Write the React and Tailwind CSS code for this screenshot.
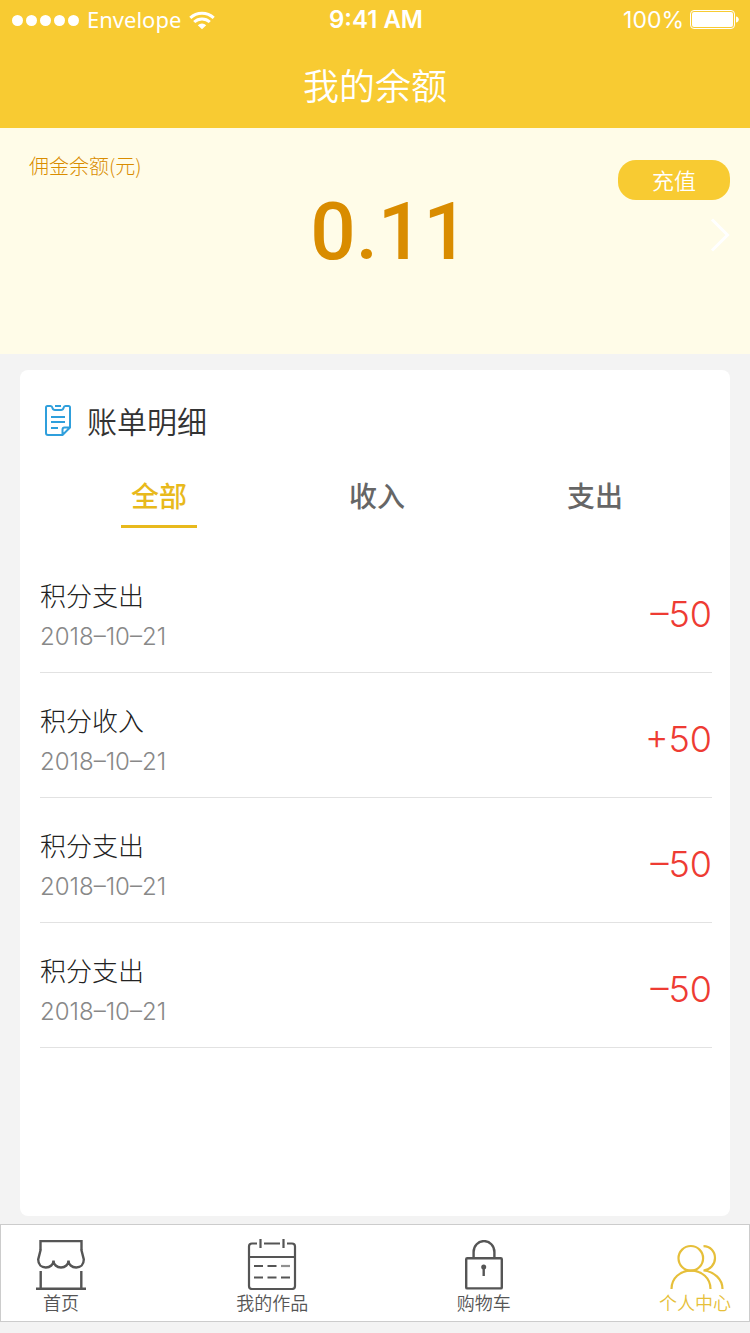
import React, { useState } from "react";

const tabs = ["全部", "收入", "支出"];

const records = [
    { id: 1, title: "积分支出", date: "2018–10–21", amount: "–50" },
    { id: 2, title: "积分收入", date: "2018–10–21", amount: "+50" },
    { id: 3, title: "积分支出", date: "2018–10–21", amount: "–50" },
    { id: 4, title: "积分支出", date: "2018–10–21", amount: "–50" },
];

function WifiIcon() {
    return (
        <svg width="26" height="19" viewBox="0 0 26 19" fill="none" stroke="currentColor" strokeWidth="3">
            <path d="M1.3 6.8a17 17 0 0 1 23.4 0" />
            <path d="M5.2 11a11.4 11.4 0 0 1 15.6 0" />
            <path d="M13 18.2 8.8 14.2a6 6 0 0 1 8.4 0Z" fill="currentColor" stroke="none" />
        </svg>
    );
}

function BatteryIcon() {
    return (
        <svg width="50" height="20" viewBox="0 0 50 20" fill="none">
            <rect x="0.5" y="0.5" width="44" height="18" rx="3.5" stroke="currentColor" />
            <rect x="2" y="2" width="41" height="15" rx="2" fill="currentColor" />
            <path d="M46 6.5c1.6.3 2.8 1.4 2.8 3s-1.2 2.7-2.8 3Z" fill="currentColor" />
        </svg>
    );
}

function BillIcon() {
    return (
        <svg width="26" height="31" viewBox="0 0 26 31" fill="none" stroke="#2f9fdc" strokeWidth="2" strokeLinejoin="round">
            <path d="M17 30H3a2 2 0 0 1-2-2V2.5Q1 1 2.5 1H5.5Q7 1 7.5 3Q8 5 10 5H16Q18 5 18.5 3Q19 1 20.5 1H23.5Q25 1 25 2.5V22.5L17.5 30V24.5a2 2 0 0 1 2-2H25" />
            <path d="M10 1H16M6 12H20M6 17H20M6 23H13" />
        </svg>
    );
}

function ShopIcon() {
    return (
        <svg width="50" height="50" viewBox="0 0 50 50" fill="none" stroke="currentColor" strokeWidth="2.4">
            <path d="M4.5 10V1.1H45.5V10" />
            <path d="M4.7 9.5 2.2 19.5C2.2 24.5 5.5 27.5 9.8 27.5C14.2 27.5 17.5 24.5 17.5 20.5C17.5 24.5 20.8 27.5 25 27.5C29.2 27.5 32.5 24.5 32.5 20.5C32.5 24.5 35.8 27.5 40.2 27.5C44.5 27.5 47.8 24.5 47.8 19.5L45.3 9.5" />
            <path d="M4.7 31V49M45.3 31V49M0 48.8H50" />
        </svg>
    );
}

function CalendarIcon() {
    return (
        <svg width="50" height="51" viewBox="0 0 50 51" fill="none" stroke="currentColor" strokeWidth="2.2">
            <path d="M10 4.5H5Q2 4.5 2 7.5V47Q2 50 5 50H45Q48 50 48 47V7.5Q48 4.5 45 4.5H40M17 4.5H33M13.5 0V9M36.5 0V9M2 18H48" />
            <path d="M7 27H16M20.5 27H29.5M7 38.5H16M20.5 38.5H29.5M34 38.5H43" />
            <path d="M34 27H43" opacity="0.65" />
        </svg>
    );
}

function LockIcon() {
    return (
        <svg width="38" height="50" viewBox="0 0 38 50" fill="none" stroke="currentColor" strokeWidth="2.4">
            <rect x="1.2" y="18.2" width="35.6" height="30.2" rx="1" />
            <path d="M8.6 19V12a10.4 10.9 0 0 1 20.8 0V19" />
            <circle cx="18.7" cy="27" r="2.5" fill="currentColor" stroke="none" />
            <path d="M18.7 27V36" />
        </svg>
    );
}

function UsersIcon() {
    return (
        <svg width="58" height="50" viewBox="-4 0 58 50" fill="none" stroke="currentColor" strokeWidth="2.2">
            <circle cx="20.8" cy="18.3" r="12.3" />
            <path d="M1.5 49C1.5 38 10 30.7 21 30.7S40.5 38 40.5 49" />
            <path d="M33.5 6.1C40 6.1 45 11 45 18C45 24.5 40 30 33.5 30.5C44 31.5 52.5 39 52.5 49" />
        </svg>
    );
}

const navItems = [
    { label: "首页", icon: ShopIcon },
    { label: "我的作品", icon: CalendarIcon },
    { label: "购物车", icon: LockIcon },
    { label: "个人中心", icon: UsersIcon, active: true },
];

function StatusBar() {
    return (
        <div className="grid grid-cols-3 items-center h-10 pl-3 pr-2.5 leading-6">
            <div className="flex items-center gap-2">
                <div className="flex gap-[3px]">
                    {[1, 2, 3, 4, 5].map((dot) => (
                        <span key={dot} className="w-[11px] h-[11px] rounded-full bg-white" />
                    ))}
                </div>
                <span className="pb-0.5 font-['Noto_Sans'] font-normal text-[22px]">Envelope</span>
                <WifiIcon />
            </div>
            <div className="text-center font-[Inter] font-semibold text-2xl">9:41 AM</div>
            <div className="flex items-center justify-end gap-1.5">
                <span className="font-[Inter] font-normal text-[23px]">100%</span>
                <BatteryIcon />
            </div>
        </div>
    );
}

function RecordRow({ record }) {
    return (
        <li className="flex items-center justify-between h-[125px] pt-3 border-b border-[#e2e2e2]">
            <div className="flex flex-col gap-0.5">
                <div className="text-[26px] leading-10 font-light text-[#222]">{record.title}</div>
                <div className="font-[Inter] font-light text-2xl leading-10 text-[#888]">{record.date}</div>
            </div>
            <div className="pb-1 font-[Inter] font-light text-4xl leading-10 text-[#ee3b33]">{record.amount}</div>
        </li>
    );
}

function App() {
    const [activeTab, setActiveTab] = useState(tabs[0]);

    return (
        <div className="flex flex-col min-h-screen bg-[#f3f3f3] font-['Noto_Sans_CJK_SC',sans-serif] font-[350]">
            <header className="bg-[#f8cb32] text-white">
                <StatusBar />
                <h1 className="h-[88px] text-4xl leading-[88px] text-center">我的余额</h1>
            </header>

            <section className="grid grid-cols-[1fr_auto_1fr] h-[226px] pl-[29px] pr-5 bg-[#fffce8]">
                <div className="pt-6 text-xl leading-7 font-light text-[#d98c00]">佣金余额(元)</div>
                <div className="pt-16 pl-5 font-[Roboto] font-medium text-[80px] leading-20 text-[#d98c00]">0.11</div>
                <div className="flex flex-col items-end gap-[18px] pt-8 text-white">
                    <button className="w-28 h-10 pb-0.5 rounded-[18px] bg-[#f8cb32] text-[22px] leading-[38px]">充值</button>
                    <a href="#detail" aria-label="查看余额明细">
                        <svg width="20" height="34" viewBox="0 0 20 34" fill="none" stroke="currentColor" strokeWidth="3">
                            <path d="M2 1.5 17.5 17 2 32.5" />
                        </svg>
                    </a>
                </div>
            </section>

            <main className="flex-1 mt-4 mx-5 mb-2 rounded-lg bg-white">
                <div className="flex items-center gap-4 pt-[30px] pl-[25px]">
                    <BillIcon />
                    <h2 className="text-3xl leading-10 text-[#333]">账单明细</h2>
                </div>

                <div className="grid grid-cols-3 justify-items-center pt-6 pl-[30px] pr-[26px]">
                    {tabs.map((tab) => (
                        <button
                            key={tab}
                            onClick={() => setActiveTab(tab)}
                            className={
                                tab === activeTab
                                    ? "w-[76px] h-16 border-b-3 border-[#e8b91c] text-[28px] font-medium text-[#e8b91c]"
                                    : "w-[76px] h-16 border-b-3 border-transparent text-[28px] font-medium text-[#666]"
                            }
                        >
                            {tab}
                        </button>
                    ))}
                </div>

                <ul className="pt-5 pl-5 pr-[18px]">
                    {records.map((record) => (
                        <RecordRow key={record.id} record={record} />
                    ))}
                </ul>
            </main>

            <nav className="flex justify-between h-[98px] mb-[11px] pl-6 pr-[18px] border border-[#ccc] bg-white">
                {navItems.map(({ label, icon: Icon, active }) => (
                    <a
                        key={label}
                        href="#nav"
                        className={
                            active
                                ? "flex flex-col items-center w-[72px] pt-3.5 text-[#e6bf3a]"
                                : "flex flex-col items-center w-[72px] pt-3.5 text-[#555]"
                        }
                    >
                        <span className="flex items-end h-[51px]">
                            <Icon />
                        </span>
                        <span className="text-lg leading-6 whitespace-nowrap">{label}</span>
                    </a>
                ))}
            </nav>
        </div>
    );
}

export default App;
